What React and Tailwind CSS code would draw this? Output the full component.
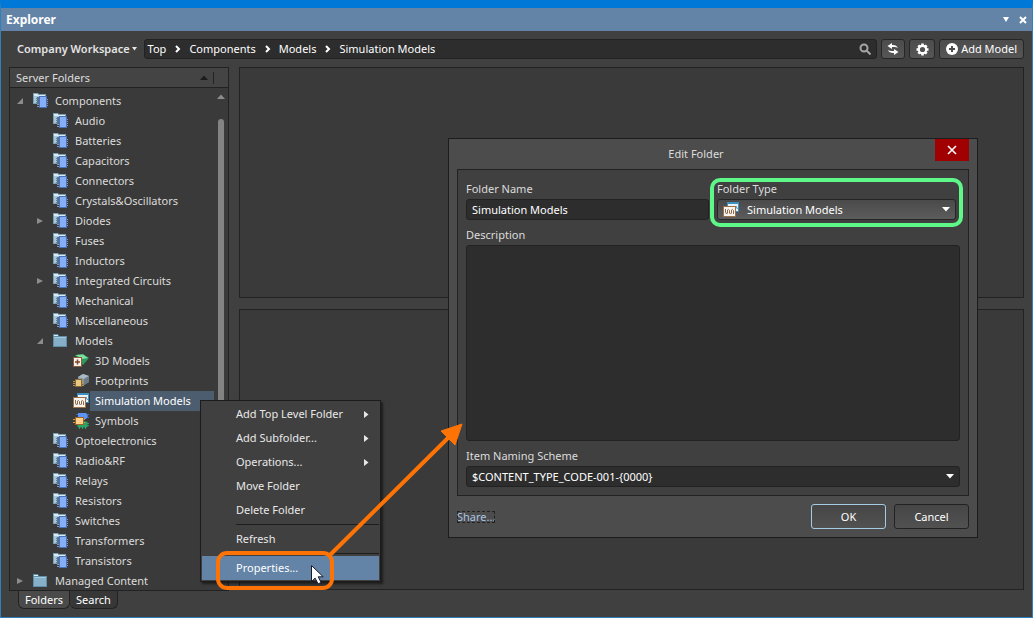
import React, { useState } from 'react';

const tree = [
  { name: 'Components', level: 0, icon: 'parts', state: 'open' },
  { name: 'Audio', level: 1, icon: 'parts' },
  { name: 'Batteries', level: 1, icon: 'parts' },
  { name: 'Capacitors', level: 1, icon: 'parts' },
  { name: 'Connectors', level: 1, icon: 'parts' },
  { name: 'Crystals&Oscillators', level: 1, icon: 'parts' },
  { name: 'Diodes', level: 1, icon: 'parts', state: 'closed' },
  { name: 'Fuses', level: 1, icon: 'parts' },
  { name: 'Inductors', level: 1, icon: 'parts' },
  { name: 'Integrated Circuits', level: 1, icon: 'parts', state: 'closed' },
  { name: 'Mechanical', level: 1, icon: 'parts' },
  { name: 'Miscellaneous', level: 1, icon: 'parts' },
  { name: 'Models', level: 1, icon: 'folder', state: 'open' },
  { name: '3D Models', level: 2, icon: 'model3d' },
  { name: 'Footprints', level: 2, icon: 'footprint' },
  { name: 'Simulation Models', level: 2, icon: 'simulation' },
  { name: 'Symbols', level: 2, icon: 'symbol' },
  { name: 'Optoelectronics', level: 1, icon: 'parts' },
  { name: 'Radio&RF', level: 1, icon: 'parts' },
  { name: 'Relays', level: 1, icon: 'parts' },
  { name: 'Resistors', level: 1, icon: 'parts' },
  { name: 'Switches', level: 1, icon: 'parts' },
  { name: 'Transformers', level: 1, icon: 'parts' },
  { name: 'Transistors', level: 1, icon: 'parts' },
  { name: 'Managed Content', level: 0, icon: 'folder', state: 'closed' },
];

const indent = ['pl-[7px]', 'pl-[27px]', 'pl-[47px]'];

const menuGroups = [
  [
    { name: 'Add Top Level Folder', sub: true },
    { name: 'Add Subfolder...', sub: true },
    { name: 'Operations...', sub: true },
    { name: 'Move Folder' },
    { name: 'Delete Folder' },
  ],
  [{ name: 'Refresh' }],
  [{ name: 'Properties...', active: true }],
];

const crumbs = ['Top', 'Components', 'Models', 'Simulation Models'];

function PartsIcon() {
  return (
    <svg width="16" height="16" viewBox="0 1 16 16">
      <path d="M0 1h5l1 1h7v10H0z" fill="#7d9fb2" />
      <path d="M1 2h4v1h7v1H1z" fill="#dcecf4" />
      <path d="M1 4h11v7H1z" fill="#a9c8da" />
      <path d="M4 5h2v7H4z" fill="#54708a" />
      <path d="M3 6.500h2M3 8.500h2M3 10.500h2" stroke="#64829a" />
      <path d="M13 7.500h2M13 9.500h2M13 11.500h2M13 13.500h2M4 12.500h2M4 14.500h2" stroke="#8497b4" />
      <path d="M6 4h8v12H6z" fill="#4a70b8" />
      <path d="M7 5h6v10H7z" fill="#86affa" />
    </svg>
  );
}

function FolderIcon() {
  return (
    <svg width="16" height="16" viewBox="0 0 16 16">
      <path d="M0 1h5l1 2h8v11H0z" fill="#5d8ea6" />
      <path d="M1 2h4v1H1z" fill="#d6edf5" />
      <path d="M1 4h12v9H1z" fill="#86afc9" />
      <path d="M1 4h12v1H1z" fill="#a6cadc" />
    </svg>
  );
}

function Model3dIcon() {
  return (
    <svg width="16" height="16" viewBox="0 0 16 16">
      <path d="M2 2l8-1 6 4-6 7z" fill="#2f9a5b" />
      <path d="M3 2l7-.5 5 3.500-6 1z" fill="#7fe0a0" />
      <path d="M0 4h9v10H0z" fill="#8b5a3c" />
      <path d="M1 5h7v8H1z" fill="#f7f1ea" />
      <path d="M4.500 6.500v5M2 9h5" stroke="#80452a" strokeWidth="1.500" />
    </svg>
  );
}

function FootprintIcon() {
  return (
    <svg width="16" height="16" viewBox="0 0 16 16">
      <path d="M5 4l5-3 6 2v6l-5 3-6-2z" fill="#8496a3" />
      <path d="M5 4l5-3 6 2-5 3z" fill="#a9b8c1" />
      <path d="M11 6l5-3v6l-5 3z" fill="#6a7b87" />
      <path d="M0 8.500h11M0 10.500h11M0 12.500h11" stroke="#b8954f" />
      <path d="M2 6h7v8H2z" fill="#8b6931" />
      <path d="M3 7h5v6H3z" fill="#e8c983" />
    </svg>
  );
}

function SimulationIcon() {
  return (
    <svg width="16" height="16" viewBox="0 0 16 16">
      <path d="M4 0h12v10H4z" fill="#3c8fc0" />
      <path d="M5 2h10v7H5z" fill="#e6f3fa" />
      <path d="M13 4l1.500 3" stroke="#3c8fc0" />
      <path d="M0 4h13v11H0z" fill="#9b7048" />
      <path d="M1 5h11v9H1z" fill="#f8f3ec" />
      <path d="M2.500 7v3l1 2 1-1V8l1-.5 1 1V11l1 1 1-1V8l1-.5 1 1V12" fill="none" stroke="#8a6a4c" />
    </svg>
  );
}

function SymbolIcon() {
  return (
    <svg width="16" height="16" viewBox="0 0 16 16">
      <path d="M3 1.500h13M3 4.500h13" stroke="#3a70c8" />
      <path d="M5 0h8l2 3-2 3H5z" fill="#5b94f4" />
      <path d="M5 9h9v5H5zM6.500 14v2M9.500 14v2M12.500 14v2M14 10.500h2M14 12.500h2" fill="#2aa468" stroke="#2aa468" />
      <path d="M0 6.500h12M0 9.500h12" stroke="#d59a45" />
      <path d="M2 4h9v8H2z" fill="#9b6528" />
      <path d="M3 5h7v6H3z" fill="#ffd08a" />
    </svg>
  );
}

const icons = {
  parts: PartsIcon,
  folder: FolderIcon,
  model3d: Model3dIcon,
  footprint: FootprintIcon,
  simulation: SimulationIcon,
  symbol: SymbolIcon,
};

function Caret({ className }) {
  return (
    <svg className={className} width="8" height="5" viewBox="0 0 8 5" fill="currentColor">
      <path d="M0 0h8L4 4.500z" />
    </svg>
  );
}

function TreeRow({ item, selected, onSelect }) {
  const Icon = icons[item.icon];
  return (
    <li role="treeitem" aria-selected={selected} aria-expanded={item.state ? item.state === 'open' : undefined}>
      <button onClick={onSelect} className={`flex h-5 w-full items-center ${indent[item.level]}`}>
        <span className="w-4 shrink-0 text-[#8c8c8c]">
          {item.state === 'open' && (
            <svg width="7" height="7" viewBox="0 0 7 7" fill="currentColor"><path d="M6 0v6H0z" /></svg>
          )}
          {item.state === 'closed' && (
            <svg width="7" height="7" viewBox="0 0 7 7" fill="currentColor"><path d="M0 0v6L6 3z" /></svg>
          )}
        </span>
        <Icon />
        <span className={`ml-px flex h-5 flex-1 items-center whitespace-nowrap pl-[5px] ${selected ? 'bg-[#4c5d70] text-white' : ''}`}>
          {item.name}
        </span>
      </button>
    </li>
  );
}

function ServerFolders() {
  const [selected, setSelected] = useState('Simulation Models');
  return (
    <aside className="flex w-[220px] shrink-0 flex-col">
      <div className="flex flex-1 flex-col border border-[#222] bg-[#3a3a3a]">
        <div className="flex h-5 items-center border-b border-[#222] bg-[#444] pl-[6px]">
          <h2 className="flex-1">Server Folders</h2>
          <Caret className="mr-[5px] rotate-180 text-[#1c1c1c]" />
          <span className="mr-[14px] h-3 w-px bg-[#222]" />
        </div>
        <div className="flex flex-1">
          <ul role="tree" aria-label="Server Folders" className="-mb-px flex-1 pt-[3px]">
            {tree.map((item) => (
              <TreeRow
                key={item.name}
                item={item}
                selected={item.name === selected}
                onSelect={() => setSelected(item.name)}
              />
            ))}
          </ul>
          <div className="flex w-[14px] flex-col items-center gap-5 pb-5 pt-[6px] text-[#8c8c8c]">
            <Caret className="rotate-180" />
            <div className="w-[6px] flex-1 rounded-full bg-[#838383]" />
          </div>
        </div>
      </div>
      <div role="tablist" className="flex pl-[9px] text-white">
        <button role="tab" aria-selected="true" className="h-[18px] rounded-b-md border border-t-0 border-[#222] bg-[#4a4a4a] px-[6px]">Folders</button>
        <button role="tab" aria-selected="false" className="h-[18px] rounded-b-md border border-l-0 border-t-0 border-[#222] bg-[#373737] px-[6px]">Search</button>
      </div>
    </aside>
  );
}

function Toolbar() {
  const btn = 'flex h-5 items-center justify-center rounded-[3px] border border-[#262626] bg-gradient-to-b from-[#4c4c4c] to-[#555] text-white';
  return (
    <div className="flex items-center gap-1 px-2 py-2">
      <button className="flex items-center gap-[2px] pl-2 font-semibold text-[#e4e4e4]">
        Company Workspace
        <svg width="5" height="4" viewBox="0 0 5 4" fill="currentColor"><path d="M0 0h5L2.500 3.500z" /></svg>
      </button>
      <div className="ml-[3px] flex h-5 flex-1 items-center rounded-[3px] border border-[#222] bg-[#2d2d2d] pl-[3px] pr-[5px] text-white">
        <nav aria-label="Breadcrumb" className="flex flex-1 items-center">
          {crumbs.map((crumb, i) => (
            <React.Fragment key={crumb}>
              {i > 0 && (
                <svg className="mx-2" width="7" height="8" viewBox="0 0 7 8" fill="none" stroke="currentColor" strokeWidth="2">
                  <path d="M2 1l3 3-3 3" />
                </svg>
              )}
              <a href="#">{crumb}</a>
            </React.Fragment>
          ))}
        </nav>
        <button aria-label="Search">
          <svg width="12" height="12" viewBox="0 0 12 12" fill="none" stroke="#a5a5a5" strokeWidth="2">
            <circle cx="5" cy="5" r="3.500" />
            <path d="M7.500 7.500l4 4" />
          </svg>
        </button>
      </div>
      <button aria-label="Refresh" className={`${btn} w-6`}>
        <svg width="12" height="12" viewBox="0 0 12 12" fill="currentColor">
          <path d="M5 0v2c3-.2 5 .6 6 3-1.500-1-3.500-1.200-6-1v2L.5 3z" />
          <path d="M7 12v-2c-3 .2-5-.6-6-3 1.500 1 3.500 1.200 6 1V6l4.500 3z" />
        </svg>
      </button>
      <button aria-label="Settings" className={`${btn} w-[26px]`}>
        <svg width="13" height="13" viewBox="-6.500 -6.500 13 13">
          <circle r="3.700" fill="none" stroke="currentColor" strokeWidth="2.200" />
          <path d="M0-6v2M0 4v2M-6 0h2M4 0h2M-4.200-4.200l1.400 1.400M2.800 2.800l1.400 1.400M-4.200 4.200l1.400-1.400M2.800-2.800l1.400-1.400" stroke="currentColor" strokeWidth="2.600" />
        </svg>
      </button>
      <button className={`${btn} gap-[3px] px-[6px]`}>
        <svg width="12" height="12" viewBox="0 0 12 12">
          <circle cx="6" cy="6" r="6" fill="currentColor" />
          <path d="M6 3v6M3 6h6" stroke="#4c4c4c" strokeWidth="2" />
        </svg>
        Add Model
      </button>
    </div>
  );
}

function ContextMenu() {
  return (
    <div role="menu" className="absolute left-[199px] top-[392px] w-[181px] border border-[#1c1c1c] bg-[#404040] p-px text-[#e8e8e8] shadow-[2px_2px_2px_rgba(0,0,0,0.5)]">
      {menuGroups.map((group, i) => (
        <React.Fragment key={i}>
          {i > 0 && <div className="my-[2px] ml-[34px] h-px bg-[#1e1e1e]" />}
          {group.map((item) => (
            <button
              key={item.name}
              role="menuitem"
              className={`flex h-6 w-full items-center justify-between pl-[34px] pr-[10px] ${item.active ? 'bg-[#6384a6] text-white' : ''}`}
            >
              {item.name}
              {item.sub && (
                <svg width="5" height="7" viewBox="0 0 5 7" fill="currentColor"><path d="M0 0v7l4.500-3.500z" /></svg>
              )}
            </button>
          ))}
        </React.Fragment>
      ))}
    </div>
  );
}

function EditFolderDialog() {
  const [name, setName] = useState('Simulation Models');
  const [description, setDescription] = useState('');
  const inputClass = 'w-full rounded-[3px] border border-[#222] bg-[#2d2d2d] px-[5px] text-white outline-none';
  const labelClass = 'mb-[2px] block h-4 leading-4';
  const buttonClass = 'h-[25px] w-[75px] rounded-[3px] border bg-gradient-to-b from-[#464646] to-[#515151] text-white';

  return (
    <div role="dialog" aria-labelledby="dialog-title" className="absolute left-[447px] top-[130px] w-[530px] border border-[#1c1c1c] bg-[#4c4c4c] px-2">
      <div className="flex h-[30px] items-start">
        <h2 id="dialog-title" className="flex-1 text-center leading-[30px]">Edit Folder</h2>
        <button aria-label="Close" className="flex h-[22px] w-[34px] items-center justify-center bg-[#a00000] text-white">
          <svg width="10" height="10" viewBox="0 0 10 10" stroke="currentColor" strokeWidth="1.600"><path d="M1 1l8 8M9 1L1 9" /></svg>
        </button>
      </div>

      <div className="border border-[#222] bg-[#404040] px-2 pb-2 pt-[11px]">
        <div className="flex gap-2">
          <div className="flex-1">
            <label htmlFor="folder-name" className={labelClass}>Folder Name</label>
            <input id="folder-name" type="text" value={name} onChange={(e) => setName(e.target.value)} className={`${inputClass} h-[21px]`} />
          </div>
          <div className="relative mr-1 w-[239px]">
            <label htmlFor="folder-type" className={labelClass}>Folder Type</label>
            <div className="relative">
              <select id="folder-type" className="h-[21px] w-full appearance-none rounded-[3px] border border-[#262626] bg-gradient-to-b from-[#4a4a4a] to-[#5c5c5c] pl-[29px] text-white outline-none">
                <option>Simulation Models</option>
              </select>
              <span className="pointer-events-none absolute inset-y-0 left-[6px] flex items-center"><SimulationIcon /></span>
              <Caret className="pointer-events-none absolute right-[6px] top-2 text-white" />
            </div>
            <div className="pointer-events-none absolute -inset-x-[7px] -bottom-[7px] -top-[3px] rounded-[10px] border-4 border-[#5df888]" />
          </div>
        </div>

        <label htmlFor="description" className={`${labelClass} mt-[7px]`}>Description</label>
        <textarea id="description" value={description} onChange={(e) => setDescription(e.target.value)} className={`${inputClass} block h-[196px] resize-none`} />

        <label htmlFor="naming-scheme" className={`${labelClass} mt-[7px]`}>Item Naming Scheme</label>
        <div className="relative">
          <select id="naming-scheme" className={`${inputClass} block h-[21px] appearance-none`}>
            <option>{'$CONTENT_TYPE_CODE-001-{0000}'}</option>
          </select>
          <Caret className="pointer-events-none absolute right-[6px] top-2 text-white" />
        </div>
      </div>

      <div className="flex items-center gap-2 py-2">
        <a href="#" className="leading-3 text-[#a9c4e4] outline-1 -outline-offset-1 outline-dashed outline-[#222]">Share...</a>
        <span className="flex-1" />
        <button className={`${buttonClass} border-[#a4cde4]`}>OK</button>
        <button className={`${buttonClass} border-[#222]`}>Cancel</button>
      </div>
    </div>
  );
}

// Highlight round the menu item, arrow to the dialog and the mouse pointer
function Callout() {
  return (
    <svg className="pointer-events-none absolute left-[209px] top-[407px]" width="260" height="180" viewBox="210 415 260 180">
      <rect x="218" y="553" width="114" height="35" rx="9" fill="none" stroke="#fd7305" strokeWidth="4" />
      <path d="M330 555L450 436" stroke="#fd7305" strokeWidth="4" />
      <path d="M462 424l-7 21-14-14z" fill="#fd7305" stroke="#fd7305" />
      <path d="M311.500 565.500v16l3.600-3.400 3 5.800 3-1.500-2.900-5.600h5z" fill="#fff" stroke="#1a1a2e" />
    </svg>
  );
}

export default function App() {
  return (
    <div className="relative flex min-h-screen flex-col border border-t-8 border-[#2f80bd] border-t-[#0078d7] bg-[#404040] font-['Noto_Sans','Open_Sans',sans-serif] text-[11px] leading-4 text-[#dcdcdc]">
      <header className="flex h-[23px] items-center gap-[10px] bg-[#6384a6] px-[5px] text-white">
        <h1 className="flex-1 text-xs font-bold">Explorer</h1>
        <button aria-label="Window menu">
          <svg width="6" height="5" viewBox="0 0 6 5" fill="currentColor"><path d="M0 0h6L3 5z" /></svg>
        </button>
        <button aria-label="Close window">
          <svg width="8" height="8" viewBox="0 0 8 8" stroke="currentColor" strokeWidth="2"><path d="M1 1l6 6M7 1L1 7" /></svg>
        </button>
      </header>
      <Toolbar />
      <div className="flex flex-1 gap-[10px] px-2 pb-2">
        <ServerFolders />
        <main className="flex flex-1 flex-col gap-[11px] pb-[19px]">
          <section className="flex-9 border border-[#222] bg-[#3a3a3a]" />
          <section className="flex-11 border border-[#222] bg-[#3a3a3a]" />
        </main>
      </div>
      <ContextMenu />
      <EditFolderDialog />
      <Callout />
    </div>
  );
}
